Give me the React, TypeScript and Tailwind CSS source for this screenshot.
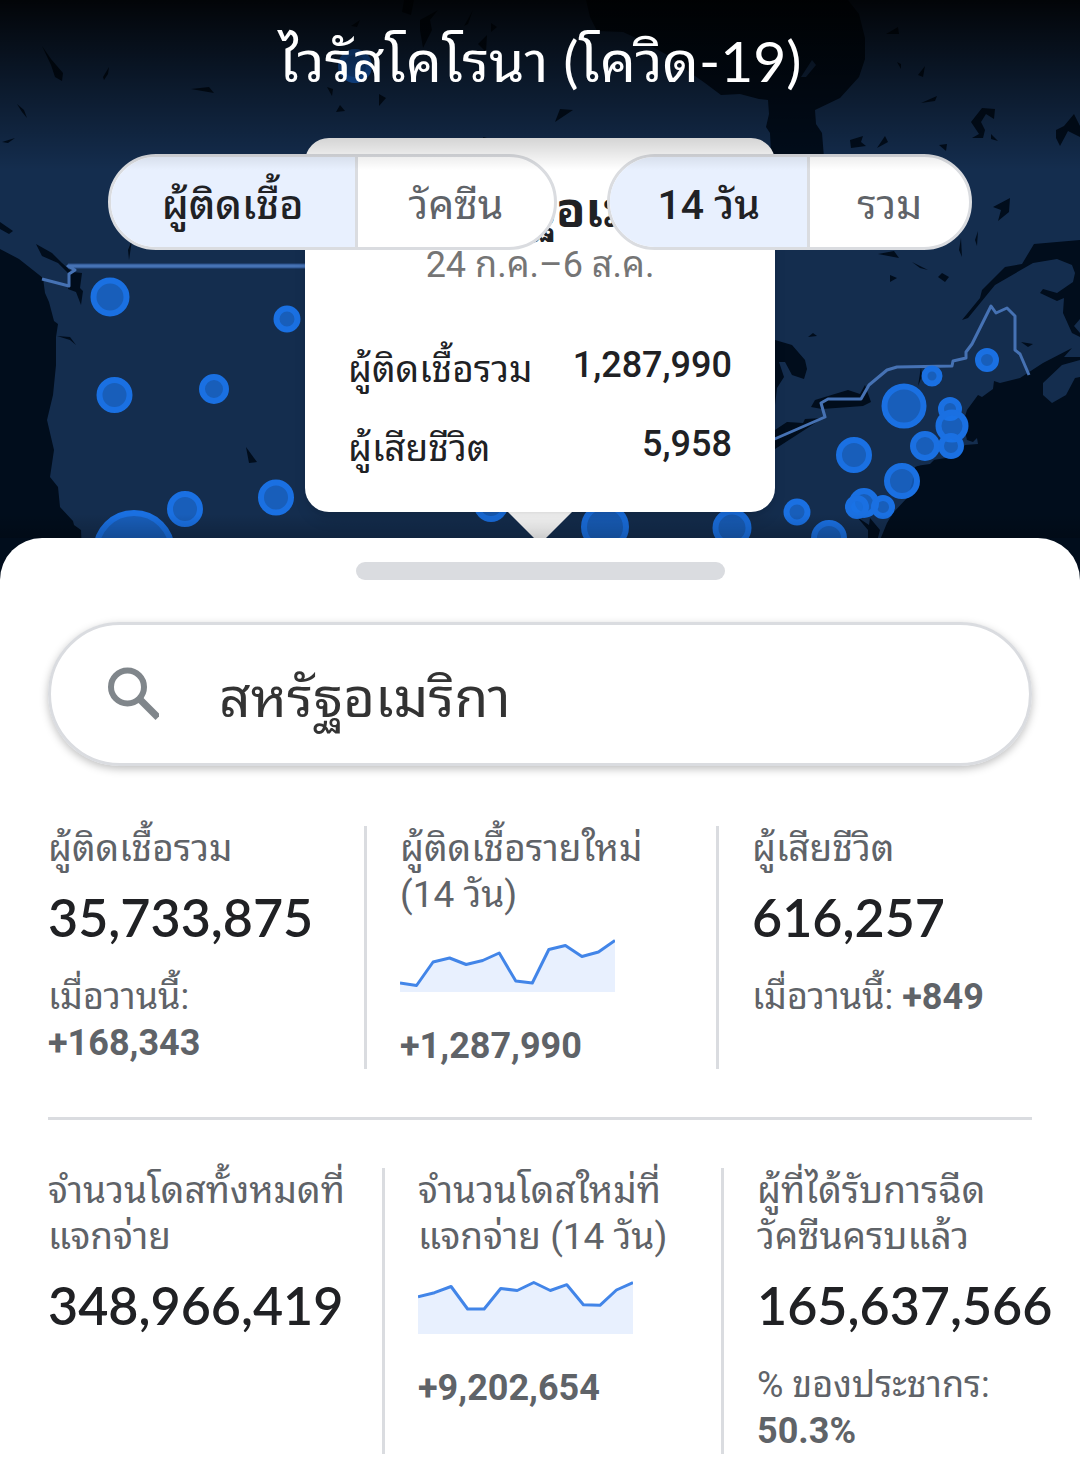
import { useState } from "react";
import { clsx } from "clsx";

const bubbles = [
    { x: 355, y: 66, r: 17 },
    { x: 110, y: 297, r: 19.5 },
    { x: 287, y: 319, r: 13.5 },
    { x: 114.5, y: 395, r: 18 },
    { x: 214, y: 389, r: 15 },
    { x: 276, y: 497.5, r: 18 },
    { x: 185, y: 509, r: 18 },
    { x: 134, y: 551, r: 41 },
    { x: 491, y: 505, r: 17 },
    { x: 605, y: 527, r: 24 },
    { x: 732, y: 528, r: 19.5 },
    { x: 987, y: 360, r: 12 },
    { x: 932, y: 376, r: 10.5 },
    { x: 904, y: 406, r: 22.5 },
    { x: 950, y: 409, r: 12 },
    { x: 952, y: 426, r: 16.5 },
    { x: 951, y: 446, r: 13 },
    { x: 925, y: 446, r: 15 },
    { x: 854, y: 455, r: 18 },
    { x: 902, y: 481, r: 18 },
    { x: 864, y: 503, r: 15 },
    { x: 857, y: 507, r: 12 },
    { x: 883, y: 507, r: 12 },
    { x: 797, y: 512, r: 13.5 },
    { x: 829, y: 538, r: 18 },
];

// Small northern lakes
const lakes = [
    "M42 46L51 59L57 66L63 73L62 81L55 77L51 65Z",
    "M109 67L103 77L104 80L108 74Z",
    "M191 89L209 87L214 93Z",
    "M17 104L24 110L27 118L22 112Z",
    "M2 142L15 138L8 143Z",
    "M327 87L333 89L332 96Z",
    "M379 94L386 98L379 106Z",
    "M340 105L345 111L336 112Z",
    "M404 0L414 0L411 15L402 12Z",
    "M420 20L438 10L430 20L432 30L423 48L420 30Z",
    "M351 26L360 20L357 27Z",
    "M473 10L468 24L464 26Z",
    "M491 23L497 27L491 32Z",
    "M487 35L478 44L486 52Z",
    "M483 137L502 142L484 143Z",
    "M560 109L573 110L555 122Z",
    "M898 27L899 34L886 34Z",
    "M925 66L923 77L918 75Z",
    "M897 62L901 64L901 69Z",
    "M937 96L935 101L921 103Z",
    "M850 140L863 136L861 142L866 146L851 148Z",
    "M885 136L888 142L877 148Z",
    "M982 108L995 109L994 119L986 114L981 122L985 130L983 138L972 138L979 134L971 122Z",
    "M991 134L998 141L991 139Z",
    "M939 145L947 144L946 151Z",
    "M1056 130L1064 126L1074 114L1080 126L1080 137L1068 131L1060 146L1056 138Z",
    "M993 207L1010 198L1009 212L998 221L1001 210Z",
    "M978 231L977 246L975 240Z",
    "M961 238L962 257L959 250Z",
    "M878 254L894 251L899 258Z",
    "M912 262L928 270L920 268Z",
    "M890 275L897 278L890 282Z",
    "M942 273L949 277L945 282L938 277Z",
    "M813 333L817 336L808 337Z",
    "M246 447L257 462L249 463Z",
    "M57 336L70 337L76 345L70 340Z",
    "M0 222L13 231L9 234L0 229Z",
    "M128 250L132 240L129 260Z",
    "M921 367L918 386L922 376Z",
    "M1021 342L1033 344L1028 347Z",
];

const casesTrend = [45, 47.5, 24, 20, 26.5, 22.5, 15, 43, 45, 11.5, 7.5, 18.5, 14, 2.5];
const dosesTrend = [16.7, 12.7, 6.5, 29, 29, 8.5, 10.5, 2.5, 10.5, 4.7, 24.7, 25.3, 10, 2.5];

function CovidMap() {
    return (
        <svg
            className="absolute inset-0 h-full w-full"
            viewBox="0 0 1080 580"
            preserveAspectRatio="xMidYMin slice"
            aria-hidden="true"
        >
            <rect width="1080" height="580" fill="#142d4e" />
            <g fill="#010d1c">
                {/* Pacific coast and the strait */}
                <path d="M0 249L19 259L43 278L45 293L49 302L54 321L58 324L56 337L56 365L53 395L47 420L54 450L50 477L58 487L60 507L73 521L74 525L81 530L83 580H0Z" />
                <path d="M36 244L52 253L62 263L72 272L82 273L80 288L83 291L81 305L76 292L68 289L68 273L58 263L42 256Z" />
                {/* Hudson Bay */}
                <path d="M586 0L590 17L597 31L623 32L636 38L671 57L685 69L705 83L721 95L740 94L759 99L768 100L769 114L766 127L770 133L771 152L774 190H826L824 158L822 133L816 124L815 110L840 98L859 77L865 59L865 38L859 14L848 0Z" />
                {/* St. Lawrence */}
                <path d="M1080 240L1034 244L1022 264L1005 267L982 290L980 298L962 320L968 318L995 285L1033 263L1057 259L1072 265L1075 273L1073 282L1057 293L1043 289L1040 293L1057 301L1064 298L1063 313L1072 333L1080 337Z" />
                {/* Atlantic */}
                <path d="M1072 348L1043 363L1020 378L1000 383L994 381L993 389L982 397L978 395L967 410L963 423L967 440L973 442L977 438L978 444L965 445L953 457L933 460L915 467L912 483L907 498L893 513L887 523L878 545V580H1080V357H1064Z" />
                {/* Great Lakes */}
                <path d="M775 340L792 345L805 360L807 369L804 379L792 375L785 362L779 362L784 377L777 388L775 405H760V340Z" />
                <path d="M815 400L848 390L860 394L865 385L871 402L863 406L822 409L811 407Z" />
                <path d="M775 430L787 422L803 423L805 419L823 418L775 449H760V430Z" />
                {/* Chesapeake Bay */}
                <path d="M857 517L869 525L870 518L880 530L876 545H868V530Z" />
                {lakes.map((d) => (
                    <path key={d} d={d} />
                ))}
            </g>
            <path d="M812 60L816 65L806 77L801 77Z" fill="#142d4e" />
            <path d="M1043 383L1062 365L1080 360V377L1075 378L1066 395L1052 403L1043 395Z" fill="#142d4e" />
            <path d="M1080 319L1074 326L1080 333Z" fill="#142d4e" />
            <path d="M916 466L924 461L935 459L930 464Z" fill="#142d4e" />
            <g fill="none" strokeLinejoin="round">
                <path d="M68 266H400" stroke="#2b5089" strokeWidth="5" />
                <path
                    d="M42 279L69 286L69 274L75 270L68 266H400M770 441L825 417L821 403L828 399L861 399L869 385L887 370L897 367L952 366L953 361L966 358L966 352L972 344L990 308L991 306L996 313L1007 308L1015 316L1015 350L1020 354L1029 375"
                    stroke="#4672b4"
                    strokeWidth="3"
                />
            </g>
            {bubbles.map((b) => (
                <circle
                    key={`${b.x}-${b.y}`}
                    cx={b.x}
                    cy={b.y}
                    r={b.r - 3}
                    fill="#1a73e8"
                    fillOpacity="0.7"
                    stroke="#1a70e2"
                    strokeWidth="6"
                />
            ))}
        </svg>
    );
}

function Toggle({ label, options, padding }: { label: string; options: string[]; padding: string }) {
    const [active, setActive] = useState(0);

    return (
        <div
            role="group"
            aria-label={label}
            className="flex h-24 overflow-hidden rounded-full border-3 border-[#dadce0] bg-white text-[41px]"
        >
            {options.map((option, i) => (
                <button
                    key={option}
                    type="button"
                    aria-pressed={active === i}
                    onClick={() => setActive(i)}
                    className={clsx(
                        "pt-2 whitespace-nowrap",
                        padding,
                        i > 0 && "border-l-3 border-[#dadce0]",
                        active === i ? "bg-[#e8f0fe] font-medium text-[#202124]" : "text-[#5f6368]"
                    )}
                >
                    {option}
                </button>
            ))}
        </div>
    );
}

function Sparkline({ points }: { points: number[] }) {
    const step = 215 / (points.length - 1);
    const line = points.map((y, i) => `${i * step},${y}`).join(" ");

    return (
        <svg className="mt-5 mb-[31px] block h-[54px] w-[215px]" viewBox="0 0 215 54" aria-hidden="true">
            <polygon points={`0,54 ${line} 215,54`} fill="#e8f0fe" />
            <polyline points={line} fill="none" stroke="#4285e8" strokeWidth="3" strokeLinejoin="round" />
        </svg>
    );
}

function BigNumber({ children }: { children: string }) {
    return (
        <p className="mt-3 mb-6 font-['Lato',sans-serif] text-[52px] leading-[66px] font-semibold whitespace-nowrap text-[#202124]">
            {children}
        </p>
    );
}

export default function App() {
    const [query, setQuery] = useState("สหรัฐอเมริกา");

    return (
        <main className="flex min-h-screen flex-col overflow-hidden bg-white font-['Roboto','Noto_Sans_Thai_Looped','Droid_Sans_Thai','Loma','Garuda',sans-serif]">
            <header className="relative h-[580px]">
                <CovidMap />

                {/* Country popup */}
                <div className="absolute top-[138px] left-1/2 w-[470px] -translate-x-1/2">
                    <div className="relative z-10 h-[374px] rounded-3xl bg-white px-[43px] pt-11 text-[#202124] shadow-lg">
                        <h2 className="pl-[72px] text-center text-5xl leading-[58px] font-bold">สหรัฐอเมริกา</h2>
                        <p className="text-center text-4xl leading-[50px] text-[#757575]">24 ก.ค.–6 ส.ค.</p>
                        <dl className="mt-9 text-4xl leading-[79px]">
                            <div className="flex justify-between">
                                <dt className="pt-1 text-[37px]">ผู้ติดเชื้อรวม</dt>
                                <dd className="font-medium">1,287,990</dd>
                            </div>
                            <div className="-mt-1 flex justify-between">
                                <dt className="pt-1 text-[37px]">ผู้เสียชีวิต</dt>
                                <dd className="font-medium">5,958</dd>
                            </div>
                        </dl>
                    </div>
                    <svg className="mx-auto block h-8 w-16" viewBox="0 0 64 32" aria-hidden="true">
                        <path d="M0 0H64L32 32Z" fill="#fff" />
                    </svg>
                </div>

                <div className="relative flex flex-col items-center">
                    <h1 className="relative z-10 pt-7 pb-[62px] font-['Lato','Noto_Sans_Thai_Looped','Droid_Sans_Thai','Loma','Garuda',sans-serif] text-[57px] leading-16 text-white">
                        ไวรัสโคโรนา (โควิด-19)
                    </h1>
                    <div className="flex gap-[50px]">
                        <Toggle label="ข้อมูล" options={["ผู้ติดเชื้อ", "วัคซีน"]} padding="px-[51px]" />
                        <Toggle label="ช่วงเวลา" options={["14 วัน", "รวม"]} padding="px-[47px]" />
                    </div>
                </div>

                <div className="pointer-events-none absolute inset-x-0 top-0 h-[170px] bg-linear-to-b from-black/90 via-black/40 via-55% to-transparent" />
                <div className="pointer-events-none absolute inset-x-0 bottom-[42px] h-6 bg-linear-to-t from-black/20 to-transparent" />
            </header>

            <section className="relative -mt-[42px] rounded-t-[42px] bg-white px-12 pt-6">
                <div className="mx-auto h-[18px] w-3/8 rounded-full bg-[#dadce0]" />

                <label className="mt-[42px] flex h-36 items-center rounded-full border-3 border-[#dadce0] px-[54px] shadow-[0_3px_8px_rgba(0,0,0,0.25)]">
                    <svg className="h-[54px] w-[54px] shrink-0" viewBox="0 0 54 54" aria-hidden="true">
                        <g fill="none" stroke="#80868b" strokeWidth="6">
                            <circle cx="22.5" cy="20" r="16.5" />
                            <path d="M34.5 32L53 50.5" strokeWidth="7" />
                        </g>
                    </svg>
                    <input
                        type="text"
                        aria-label="ค้นหา"
                        value={query}
                        onChange={(e) => setQuery(e.target.value)}
                        className="ml-[60px] h-full min-w-0 flex-1 pb-1 text-[55px] text-[#333] outline-none"
                    />
                </label>

                <div className="mt-[60px] grid grid-cols-[319fr_352fr_313fr] border-b-3 border-[#dadce0] pb-12 text-4xl leading-[46px] text-[#5f6368]">
                    <div className="min-w-0 border-r-3 border-[#dadce0]">
                        <h3 className="text-[37px]">ผู้ติดเชื้อรวม</h3>
                        <BigNumber>35,733,875</BigNumber>
                        <p>
                            เมื่อวานนี้:
                            <br />
                            <b>+168,343</b>
                        </p>
                    </div>
                    <div className="min-w-0 border-r-3 border-[#dadce0] pl-[33px]">
                        <h3 className="text-[37px]">
                            ผู้ติดเชื้อรายใหม่
                            <br />
                            (14 วัน)
                        </h3>
                        <Sparkline points={casesTrend} />
                        <b>+1,287,990</b>
                    </div>
                    <div className="min-w-0 pl-[33px]">
                        <h3 className="text-[37px]">ผู้เสียชีวิต</h3>
                        <BigNumber>616,257</BigNumber>
                        <p className="whitespace-nowrap">
                            เมื่อวานนี้: <b>+849</b>
                        </p>
                    </div>
                </div>

                <div className="mt-12 mb-6 grid grid-cols-[337fr_339fr_308fr] text-4xl leading-[46px] text-[#5f6368]">
                    <div className="min-w-0 border-r-3 border-[#dadce0]">
                        <h3 className="text-[37px] whitespace-nowrap">
                            จำนวนโดสทั้งหมดที่
                            <br />
                            แจกจ่าย
                        </h3>
                        <BigNumber>348,966,419</BigNumber>
                    </div>
                    <div className="min-w-0 border-r-3 border-[#dadce0] pl-[33px]">
                        <h3 className="text-[37px] whitespace-nowrap">
                            จำนวนโดสใหม่ที่
                            <br />
                            แจกจ่าย (14 วัน)
                        </h3>
                        <Sparkline points={dosesTrend} />
                        <b>+9,202,654</b>
                    </div>
                    <div className="min-w-0 pl-[33px]">
                        <h3 className="text-[37px] whitespace-nowrap">
                            ผู้ที่ได้รับการฉีด
                            <br />
                            วัคซีนครบแล้ว
                        </h3>
                        <BigNumber>165,637,566</BigNumber>
                        <p className="whitespace-nowrap">
                            % ของประชากร:
                            <br />
                            <b>50.3%</b>
                        </p>
                    </div>
                </div>
            </section>
        </main>
    );
}
